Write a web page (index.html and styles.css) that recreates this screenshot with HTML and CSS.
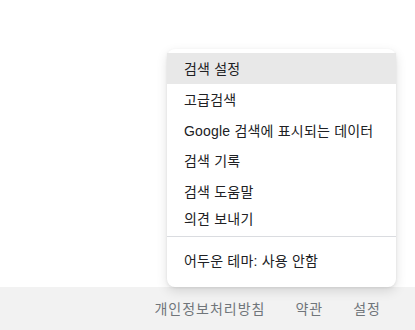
FILE: index.html
```html
<!DOCTYPE html>
<html>
<head>
<meta name="viewport" content="width=device-width, initial-scale=1">
<link rel="stylesheet" href="styles.css">
</head>
<body>

<div class="page">
    <div class="content"></div>

    <!-- Footer -->
    <footer class="footer">
        <a href="#">개인정보처리방침</a>
        <a href="#">약관</a>
        <a href="#">설정</a>
    </footer>
</div>

<!-- Settings menu -->
<div class="menu">
    <a href="#" class="menu-item active">검색 설정</a>
    <a href="#" class="menu-item">고급검색</a>
    <a href="#" class="menu-item">Google 검색에 표시되는 데이터</a>
    <a href="#" class="menu-item">검색 기록</a>
    <a href="#" class="menu-item">검색 도움말</a>
    <a href="#" class="menu-item short">의견 보내기</a>
    <div class="divider"></div>
    <a href="#" class="menu-item">어두운 테마: 사용 안함</a>
</div>

</body>
</html>
```

FILE: styles.css
```css
* {
    box-sizing: border-box;
    margin: 0;
    padding: 0;
}

body {
    font-family: 'Liberation Sans', 'Noto Sans CJK KR', sans-serif;
    font-size: 14px;
    background: #fff;
    color: #202124;
}

.page {
    height: 330px;
    display: flex;
    flex-direction: column;
}

.content {
    flex-grow: 1;
}

.footer {
    height: 43px;
    background: #f2f2f2;
    display: flex;
    justify-content: flex-end;
    align-items: center;
    gap: 30px;
    padding: 0 34px 1px 0;
}

.footer a {
    color: #70757a;
    text-decoration: none;
    letter-spacing: 1px;
}

.menu {
    position: absolute;
    top: 49px;
    left: 167px;
    width: 229px;
    background: #fff;
    border-radius: 8px;
    box-shadow: 0 4px 12px rgba(0, 0, 0, 0.12), 0 1px 3px rgba(0, 0, 0, 0.08);
    padding: 4px 0 11px;
    display: flex;
    flex-direction: column;
}

.menu-item {
    display: flex;
    align-items: center;
    height: 30.5px;
    padding-left: 17px;
    color: #202124;
    text-decoration: none;
    white-space: nowrap;
    letter-spacing: 0.2px;
}

.menu-item.active {
    background: #e8e8e8;
    height: 31px;
    padding-bottom: 2px;
}

.menu-item.short {
    height: 23px;
}

.divider {
    border-top: 1px solid #dadce0;
    margin: 7px 0 8px;
}
```
